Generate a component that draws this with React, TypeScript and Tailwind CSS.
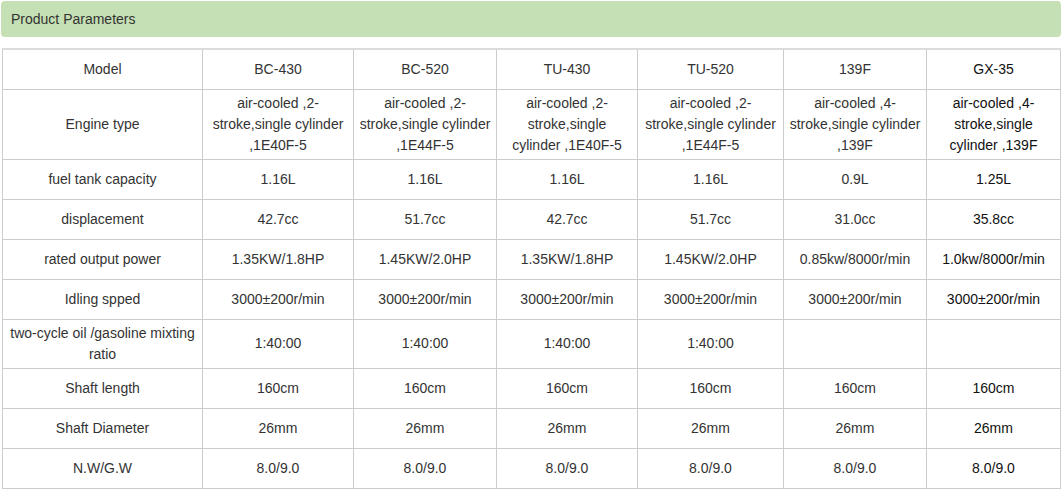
const rows: string[][] = [
  ["Model", "BC-430", "BC-520", "TU-430", "TU-520", "139F", "GX-35"],
  [
    "Engine type",
    "air-cooled ,2-stroke,single cylinder ,1E40F-5",
    "air-cooled ,2-stroke,single cylinder ,1E44F-5",
    "air-cooled ,2-stroke,single cylinder ,1E40F-5",
    "air-cooled ,2-stroke,single cylinder ,1E44F-5",
    "air-cooled ,4-stroke,single cylinder ,139F",
    "air-cooled ,4-stroke,single cylinder ,139F",
  ],
  ["fuel tank capacity", "1.16L", "1.16L", "1.16L", "1.16L", "0.9L", "1.25L"],
  ["displacement", "42.7cc", "51.7cc", "42.7cc", "51.7cc", "31.0cc", "35.8cc"],
  [
    "rated output power",
    "1.35KW/1.8HP",
    "1.45KW/2.0HP",
    "1.35KW/1.8HP",
    "1.45KW/2.0HP",
    "0.85kw/8000r/min",
    "1.0kw/8000r/min",
  ],
  [
    "Idling spped",
    "3000±200r/min",
    "3000±200r/min",
    "3000±200r/min",
    "3000±200r/min",
    "3000±200r/min",
    "3000±200r/min",
  ],
  ["two-cycle oil /gasoline mixting ratio", "1:40:00", "1:40:00", "1:40:00", "1:40:00", "", ""],
  ["Shaft length", "160cm", "160cm", "160cm", "160cm", "160cm", "160cm"],
  ["Shaft Diameter", "26mm", "26mm", "26mm", "26mm", "26mm", "26mm"],
  ["N.W/G.W", "8.0/9.0", "8.0/9.0", "8.0/9.0", "8.0/9.0", "8.0/9.0", "8.0/9.0"],
];

const widths = [200, 151, 143, 141, 146, 143, 134];

export default function App() {
  return (
    <div
      className="w-[1062px] h-[490px] bg-white text-[#333] overflow-hidden"
      style={{ fontFamily: '"Liberation Sans", Arial, sans-serif' }}
    >
      <div className="ml-px mt-px w-[1060px] h-[36px] rounded bg-[#c5e0b4] flex items-center pl-[10px] text-[14px]">
        Product Parameters
      </div>
      <table className="ml-[2px] mt-[11px] border-collapse table-fixed w-[1058px] text-[14px] leading-[21px] border-t-2 border-t-[#dcdcdc]">
        <colgroup>
          {widths.map((w, i) => (
            <col key={i} style={{ width: w }} />
          ))}
        </colgroup>
        <tbody>
          {rows.map((r, ri) => (
            <tr key={ri}>
              {r.map((c, ci) => (
                <td
                  key={ci}
                  className={
                    "border border-[#cccccc] h-[40px] py-[3px] px-[5px] text-center align-middle " +
                    (ci === 6 ? "text-[#111]" : "")
                  }
                >
                  {c}
                </td>
              ))}
            </tr>
          ))}
        </tbody>
      </table>
    </div>
  );
}
